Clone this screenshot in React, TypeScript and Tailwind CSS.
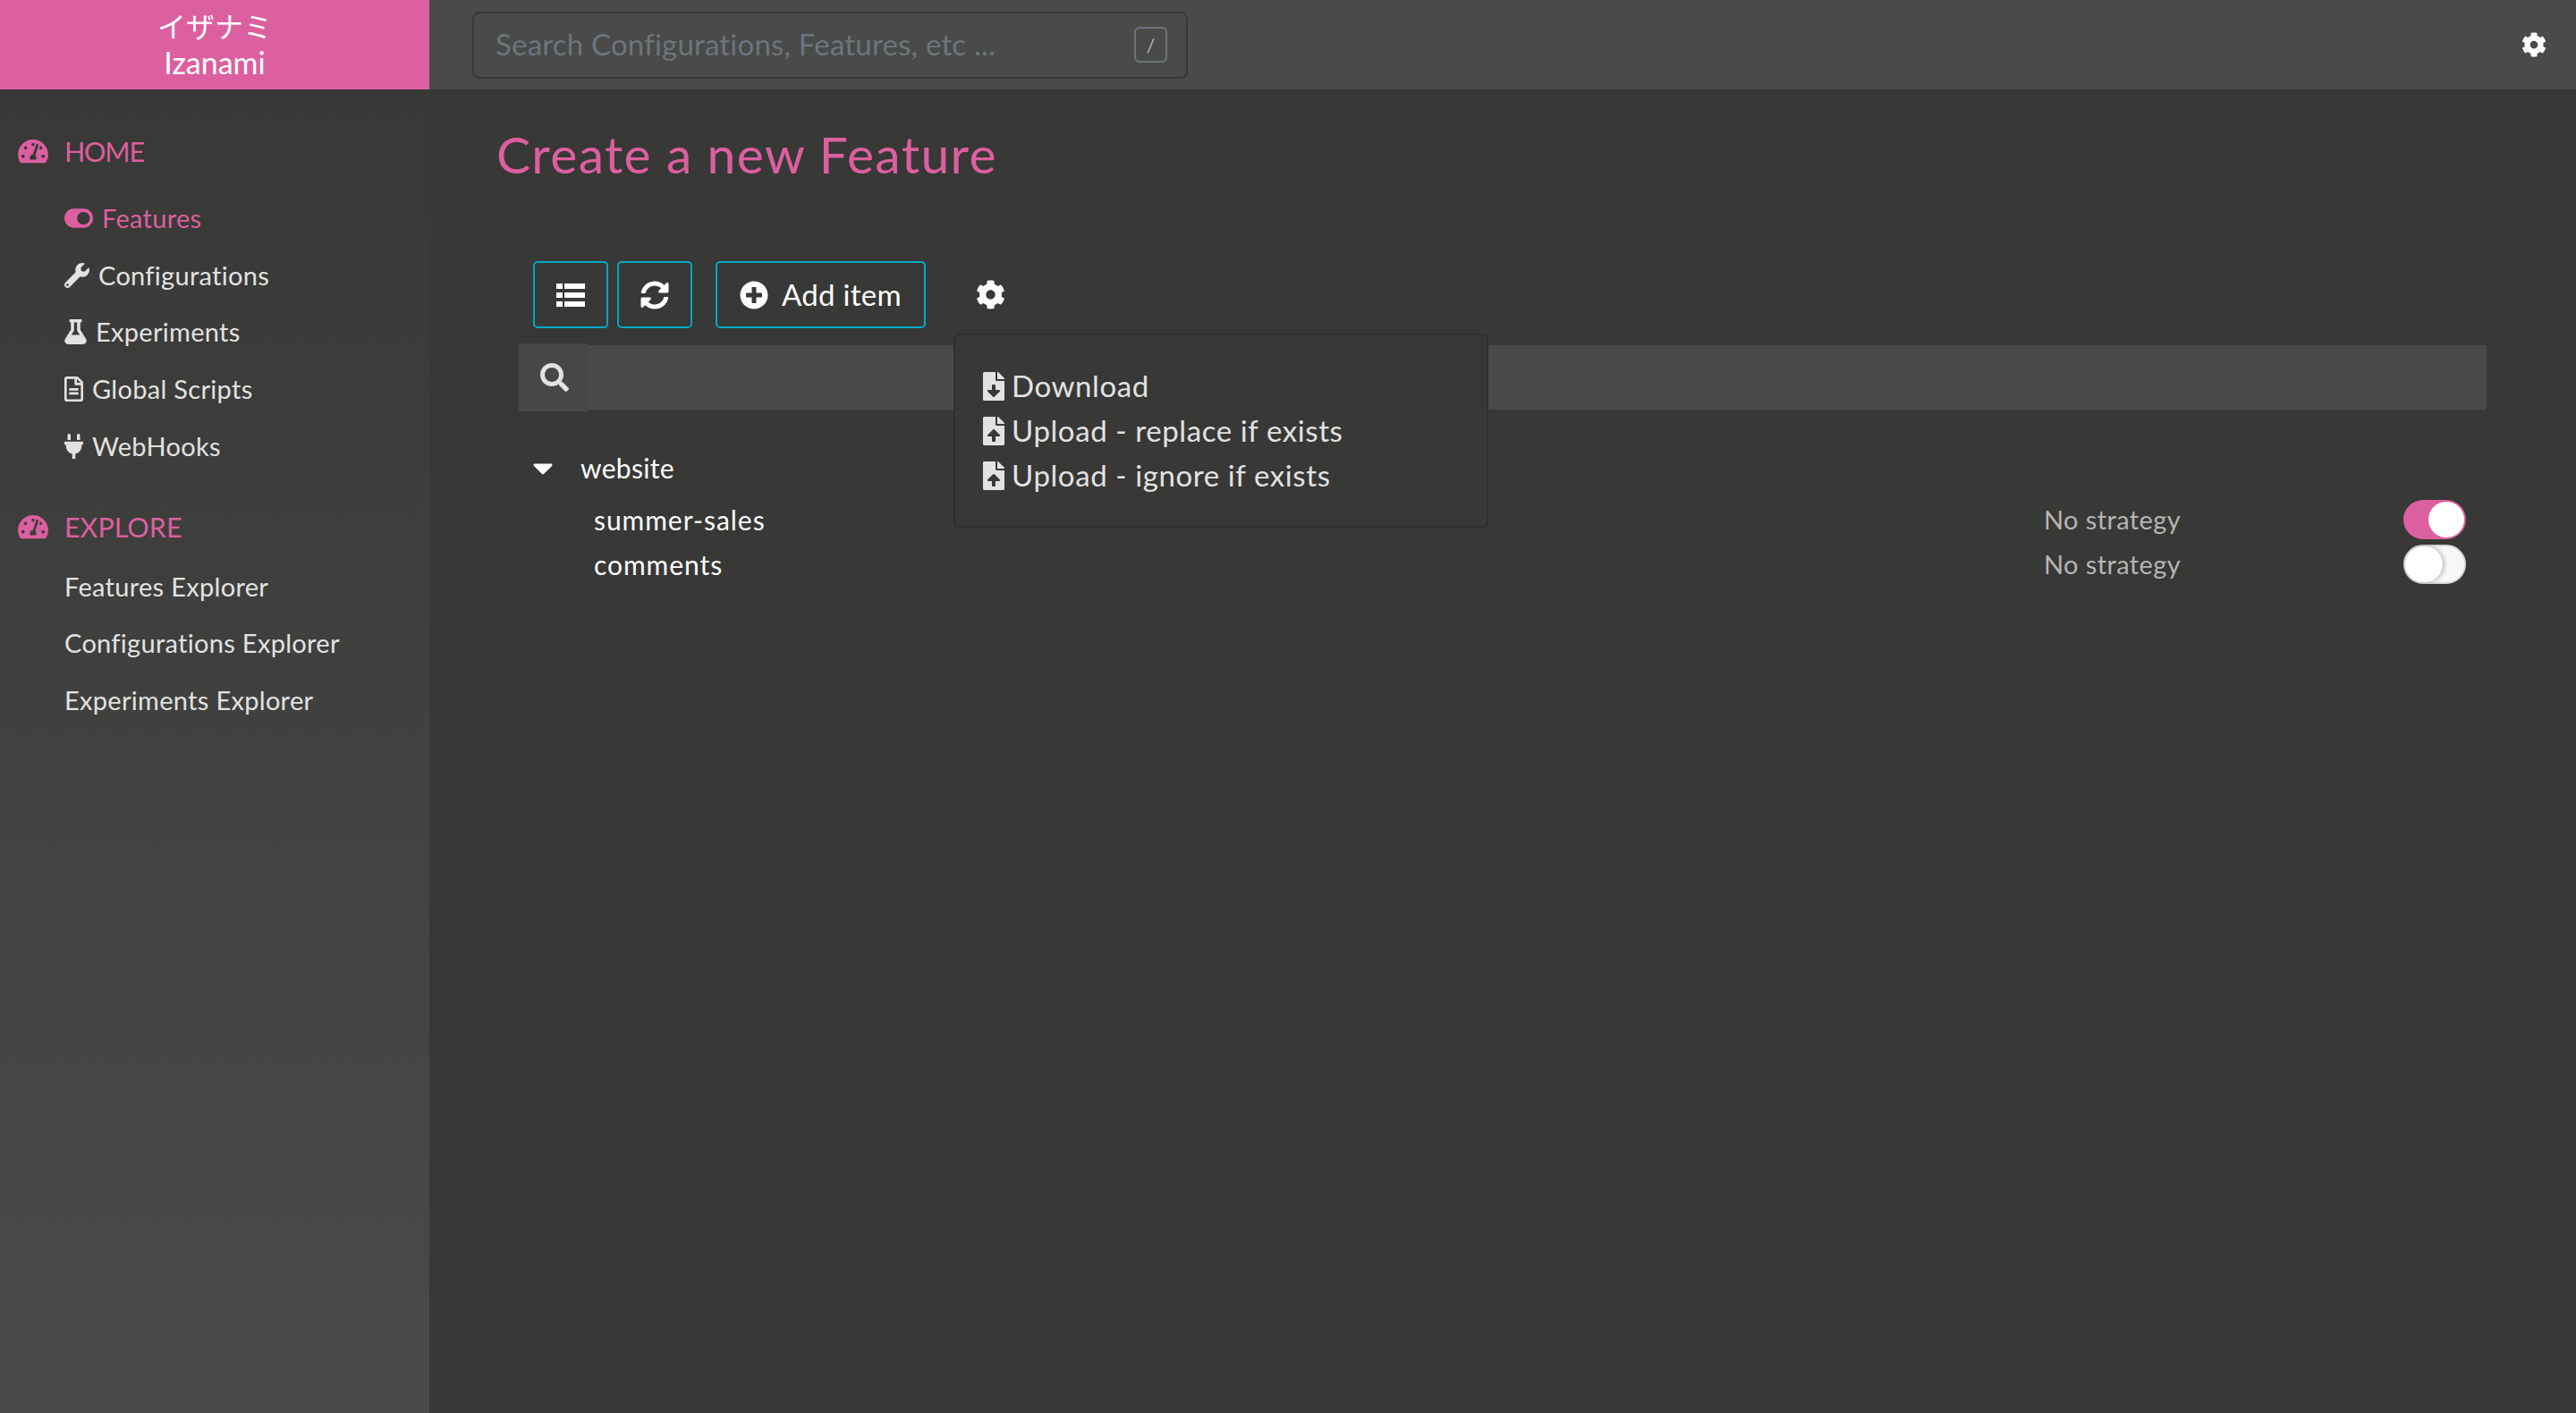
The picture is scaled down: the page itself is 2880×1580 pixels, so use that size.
import { FaTachometerAlt, FaToggleOn, FaWrench, FaFlask, FaRegFileAlt, FaPlug, FaSyncAlt, FaPlusCircle, FaCog, FaSearch, FaFileDownload, FaFileUpload, FaCaretDown } from 'react-icons/fa';
import type { ReactNode } from 'react';

function NavItem({ icon, label, active, gap = 'gap-[10px]' }: { icon?: ReactNode; label: string; active?: boolean; gap?: string }) {
  return (
    <a className={`flex h-[63.7px] items-center pl-[72px] text-[29px] tracking-[0.3px] ${gap} ${active ? 'text-[#dc5f9f]' : 'text-[#e2e2e2]'}`}>
      {icon}
      <span>{label}</span>
    </a>
  );
}

function SectionTitle({ label, tracking }: { label: string; tracking?: string }) {
  return (
    <div className={`flex items-center gap-[18px] pl-[20px] text-[30.5px] leading-[38px] text-[#dc5f9f] ${tracking ?? ''}`}>
      <FaTachometerAlt className="h-[30px] w-[34px]" />
      <span>{label}</span>
    </div>
  );
}

function FeatureRow({ name, on }: { name: string; on: boolean }) {
  return (
    <div className="flex h-[50px] items-center pl-[84px] pr-[23px] text-[#fff]">
      <span className="flex-1 text-[30px] tracking-[0.95px]">{name}</span>
      <span className="w-[402px] text-[29px] tracking-[0.4px] text-[#b5b5b5]">No strategy</span>
      {on ? (
        <span className="flex h-[44px] w-[70px] items-center justify-end rounded-full bg-[#dc5f9f] pr-[2px]">
          <span className="h-[40px] w-[40px] rounded-full bg-white" />
        </span>
      ) : (
        <span className="flex h-[44px] w-[70px] items-center rounded-full border-2 border-[#d6d6d6] bg-[#f7f7f7]">
          <span className="h-[40px] w-[42px] rounded-full bg-white shadow-[2px_0_4px_rgba(0,0,0,0.25)]" />
        </span>
      )}
    </div>
  );
}

export default function App() {
  return (
    <div className="flex h-screen flex-col overflow-hidden bg-[#383836] font-['Lato','Liberation_Sans','Noto_Sans_CJK_JP',sans-serif]">
      <header className="flex h-[100px] shrink-0 items-center bg-[#4a4a48]">
        <div className="flex h-full w-[480px] shrink-0 flex-col items-center justify-center bg-[#dc5f9f] text-[34px] leading-[41px] text-white">
          <span className="-mt-[2px] font-['Noto_Sans_CJK_JP',sans-serif] text-[32px]">イザナミ</span>
          <span>Izanami</span>
        </div>
        <div className="ml-[48px] flex h-[75px] w-[800px] items-center rounded-[8px] border-2 border-[#383836] pl-[24px] pr-[21px] text-[33px] tracking-[0.2px] text-[#6c757d]">
          <span className="flex-1">Search Configurations, Features, etc ...</span>
          <span className="flex h-[40px] w-[37px] items-center justify-center rounded-[6px] border-2 border-[#6c757d] text-[22px] text-[#b5b5b5]">/</span>
        </div>
        <FaCog className="ml-auto mr-[33px] h-[28px] w-[28px] text-white" />
      </header>

      <div className="flex min-h-0 flex-1">
        <aside className="w-[480px] shrink-0 bg-linear-to-b from-[#383836] to-[#4a4a48] pt-[50px]">
          <SectionTitle label="HOME" tracking="tracking-[-1.2px]" />
          <div className="mt-[24px] mb-[40px] flex flex-col">
            <NavItem active label="Features" icon={<FaToggleOn className="h-[32px] w-[32px]" />} />
            <NavItem label="Configurations" icon={<FaWrench className="h-[28px] w-[28px]" />} />
            <NavItem label="Experiments" icon={<FaFlask className="h-[28px] w-[25px]" />} />
            <NavItem label="Global Scripts" icon={<FaRegFileAlt className="h-[28px] w-[21px]" />} />
            <NavItem label="WebHooks" icon={<FaPlug className="h-[28px] w-[21px]" />} />
          </div>
          <SectionTitle label="EXPLORE" />
          <div className="mt-[15px] flex flex-col">
            <NavItem label="Features Explorer" />
            <NavItem label="Configurations Explorer" />
            <NavItem label="Experiments Explorer" />
          </div>
        </aside>

        <main className="min-w-0 flex-1 pt-[32px]">
          <h1 className="ml-[75px] text-[57px] leading-[80px] tracking-[1.35px] text-[#dc5f9f]">Create a new Feature</h1>

          <div className="relative mt-[80px] ml-[100px] mr-[100px]">
            <div className="ml-[16px] flex items-center">
              <button className="flex h-[75px] w-[84px] items-center justify-center rounded-[5px] border-2 border-[#00a9c5] text-white">
                <svg viewBox="0 0 32 26" className="h-[26px] w-[32px] fill-current">
                  <rect x="0" y="0" width="7" height="6" />
                  <rect x="9" y="0" width="23" height="6" />
                  <rect x="0" y="10" width="7" height="6" />
                  <rect x="9" y="10" width="23" height="6" />
                  <rect x="0" y="20" width="7" height="6" />
                  <rect x="9" y="20" width="23" height="6" />
                </svg>
              </button>
              <button className="ml-[10px] flex h-[75px] w-[84px] items-center justify-center rounded-[5px] border-2 border-[#00a9c5] text-white">
                <FaSyncAlt className="h-[32px] w-[32px]" />
              </button>
              <button className="ml-[26px] flex h-[75px] w-[235px] items-center justify-center gap-[15px] rounded-[5px] border-2 border-[#00a9c5] text-[33px] tracking-[0.3px] text-white">
                <FaPlusCircle className="h-[32px] w-[32px]" />
                <span>Add item</span>
              </button>
              <FaCog className="ml-[56px] h-[33px] w-[33px] text-white" />
            </div>

            <div className="mt-[17px] flex items-stretch">
              <div className="flex h-[76px] w-[78px] items-center justify-center bg-[#474745] text-[#e2e2e2]">
                <FaSearch className="ml-[2px] h-[32px] w-[32px]" />
              </div>
              <div className="my-[2px] flex-1 bg-[#4a4a48]" />
            </div>

            {/* settings menu */}
            <div className="absolute left-[486px] top-[81px] flex h-[217px] w-[598px] flex-col justify-center rounded-[6px] border-2 border-[#2f2f2d] bg-[#383836] pl-[31px] text-[33px] tracking-[0.6px] text-[#e2e2e2]">
              <div className="flex h-[50px] items-center gap-[8px]"><FaFileDownload className="h-[32px] w-[24px]" />Download</div>
              <div className="flex h-[50px] items-center gap-[8px]"><FaFileUpload className="h-[32px] w-[24px]" />Upload - replace if exists</div>
              <div className="flex h-[50px] items-center gap-[8px]"><FaFileUpload className="h-[32px] w-[24px]" />Upload - ignore if exists</div>
            </div>

            <div className="mt-[38px] flex h-[50px] items-center text-[30px] tracking-[0.3px] text-white">
              <FaCaretDown className="ml-[13px] h-[36px] w-[28px]" />
              <span className="ml-[28px]">website</span>
            </div>
            <div className="mt-[8px]">
              <FeatureRow name="summer-sales" on />
              <FeatureRow name="comments" on={false} />
            </div>
          </div>
        </main>
      </div>
    </div>
  );
}
